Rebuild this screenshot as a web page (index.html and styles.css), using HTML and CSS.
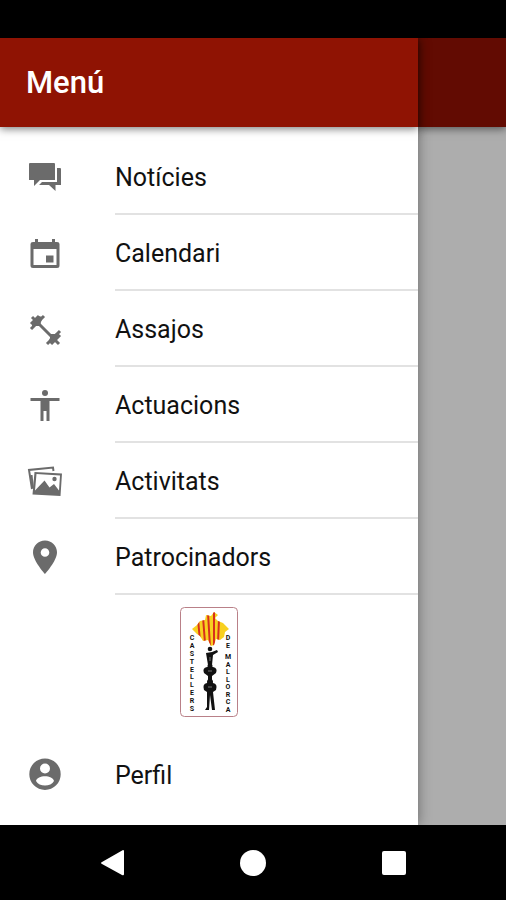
FILE: index.html
```html
<!DOCTYPE html>
<html lang="ca">
<head>
    <meta charset="UTF-8">
    <meta name="viewport" content="width=device-width, initial-scale=1.0">
    <title>Menú</title>
    <link rel="stylesheet" href="styles.css">
</head>
<body>
    <div class="status-bar"></div>

    <div class="screen">
        <aside class="drawer">
            <header class="toolbar">
                <h1>Menú</h1>
            </header>

            <nav class="menu">
                <a class="menu-item" href="#noticies">
                    <svg class="icon" viewBox="0 0 38 38">
                        <path d="M4 5H28Q29 5 29 6V22H14L8 28V22H3V6Q3 5 4 5Z"/>
                        <path d="M31 10H34Q35 10 35 11V27H29.500V33L23 27H13L16 24H31Z"/>
                    </svg>
                    <span class="label">Notícies</span>
                </a>
                <a class="menu-item" href="#calendari">
                    <svg class="icon" viewBox="0 0 38 38">
                        <path fill-rule="evenodd" d="M9 5H12V8H26V5H29V8H31Q33.500 8 33.500 10V31.500Q33.500 34 31 34H7Q4.500 34 4.500 31.500V10Q4.500 8 7 8H9ZM7.500 15V31H30.500V15Z"/>
                        <path d="M20 21.500H27.500V28.500H20Z"/>
                    </svg>
                    <span class="label">Calendari</span>
                </a>
                <a class="menu-item" href="#assajos">
                    <svg class="icon" viewBox="0 0 38 38">
                        <path class="stroke" d="M6 7L33 34"/>
                        <path class="stroke" d="M5 14L13 6M5 19L18 6M25 34L34 25M21 34L34 21"/>
                        <path d="M6 12L12 6L17 7L15 12L14 16L9 16L6 18ZM22 33L24 28L24 24L29 24L33 22L33 27L27 33Z"/>
                    </svg>
                    <span class="label">Assajos</span>
                </a>
                <a class="menu-item" href="#actuacions">
                    <svg class="icon" viewBox="0 0 38 38">
                        <circle cx="19" cy="7" r="3"/>
                        <path d="M4.500 12H33.500V15H23.500V35H20.500V25H17.500V35H14.500V15H4.500Z"/>
                    </svg>
                    <span class="label">Actuacions</span>
                </a>
                <a class="menu-item" href="#activitats">
                    <svg class="icon" viewBox="0 0 38 38">
                        <path class="stroke thin" d="M6 27L3 8L27 5.500L27.500 9"/>
                        <path class="stroke thin" d="M5.500 13L7 26"/>
                        <path fill-rule="evenodd" d="M8.500 10L36 11.500L34.500 34L6.500 32.500ZM10.500 12L9 28.500L18.500 18.500L23.500 25.500L28 22L33 28.500L34 13.500Z"/>
                        <circle cx="28.500" cy="17" r="2.200"/>
                    </svg>
                    <span class="label">Activitats</span>
                </a>
                <a class="menu-item" href="#patrocinadors">
                    <svg class="icon" viewBox="0 0 38 38">
                        <path fill-rule="evenodd" d="M19 2.500C12.300 2.500 7 7.800 7 14.300C7 23 19 36 19 36S31 23 31 14.300C31 7.800 25.700 2.500 19 2.500ZM19 10.200A4.300 4.300 0 1 1 19 18.800A4.300 4.300 0 1 1 19 10.200Z"/>
                    </svg>
                    <span class="label">Patrocinadors</span>
                </a>
            </nav>

            <svg class="logo" viewBox="0 0 58 110" role="img" aria-label="Castellers de Mallorca">
                <defs>
                    <clipPath id="island">
                        <path d="M12 22L17 18L20 14L25 13L26 8L31 9L34 5L38 8L35 11L38 14L43 16L49 22L45 25L44 30L40 33L36 32L34 38L31 39L28 33L23 34L20 29L17 27Z"/>
                    </clipPath>
                </defs>
                <rect class="logo-frame" x="0.500" y="0.500" width="57" height="109" rx="4"/>
                <g clip-path="url(#island)">
                    <path class="logo-yellow" d="M10 4H50V40H10Z"/>
                    <path class="logo-stripes" d="M18 12L20 34M23 10L25 36M28 6L30 40M34 4L34 40M39 12L38 36"/>
                </g>
                <!-- human tower -->
                <g class="logo-people">
                    <circle cx="30" cy="42" r="2.300"/>
                    <path d="M26 46L32 45L37 43L38 45L33 48L32 58H28Z"/>
                    <circle cx="30" cy="59" r="2.500"/>
                    <path d="M27 60Q22 61 24 66L28 69V75H32V69L36 66Q38 61 33 60Z"/>
                    <circle cx="30" cy="75" r="3"/>
                    <path d="M27 76Q22 77 24 83L27 85L27 100L25 103H29L30 88L32 103H35L33 85L36 83Q38 77 33 76Z"/>
                </g>
                <path class="logo-lines" d="M28 64H32M28 80H32M30 50V54"/>
                <g class="logo-text">
                    <text x="12 12 12 12 12 12 12 12 12 12" y="33 41 49 57 65 72 80 88 96 104">CASTELLERS</text>
                    <text x="48 48" y="33 41">DE</text>
                    <text x="48 48 48 48 48 48 48 48" y="52 60 67 75 82 90 97 105">MALLORCA</text>
                </g>
            </svg>

            <a class="menu-item profile" href="#perfil">
                <svg class="icon" viewBox="0 0 38 38">
                    <path fill-rule="evenodd" d="M19 3.500A15.700 15.700 0 1 1 19 34.900A15.700 15.700 0 1 1 19 3.500ZM19 8.500A5 5 0 1 0 19 18.500A5 5 0 1 0 19 8.500ZM10 26C13 32 25 32 28 26C27 19.500 11 19.500 10 26Z"/>
                </svg>
                <span class="label">Perfil</span>
            </a>
        </aside>

        <main class="page">
            <div class="toolbar page-toolbar"></div>
        </main>
    </div>

    <div class="system-nav">
        <button type="button" aria-label="Enrere">
            <svg viewBox="0 0 28 28"><path d="M4 13L25 1Q26 1 26 2V25Q26 27 24 26L4 15Q2 14 4 13Z"/></svg>
        </button>
        <button type="button" aria-label="Inici">
            <svg viewBox="0 0 28 28"><circle cx="14" cy="14" r="13"/></svg>
        </button>
        <button type="button" aria-label="Recents">
            <svg viewBox="0 0 28 28"><rect x="2" y="2" width="24" height="24" rx="2"/></svg>
        </button>
    </div>
</body>
</html>
```

FILE: styles.css
```css
* {
    margin: 0;
    padding: 0;
    box-sizing: border-box;
}

body {
    font-family: Roboto, sans-serif;
    background: #000;
    min-height: 100vh;
    display: flex;
    flex-direction: column;
}

.status-bar {
    height: 38px;
}

.screen {
    flex: 1;
    display: flex;
    overflow: hidden;
}

/* Side menu */
.drawer {
    flex: 1;
    display: flex;
    flex-direction: column;
    background: #fff;
    box-shadow: 0 0 12px rgba(0, 0, 0, 0.4);
    z-index: 1;
}

.toolbar {
    height: 89px;
    padding: 0 26px;
    display: flex;
    align-items: center;
    background: #8f1303;
    box-shadow: 0 2px 8px rgba(0, 0, 0, 0.5);
}

.toolbar h1 {
    color: #fff;
    font-size: 31px;
    font-weight: 500;
}

.menu {
    padding-top: 12px;
}

.menu-item {
    height: 76px;
    padding-left: 26px;
    display: flex;
    align-items: center;
    gap: 51px;
    color: #111;
    font-size: 25px;
    text-decoration: none;
}

.label {
    flex: 1;
    height: 100%;
    padding-top: 3px;
    display: flex;
    align-items: center;
    border-bottom: 2px solid #e2e2e2;
}

.profile .label {
    border-bottom: none;
}

.icon {
    width: 38px;
    height: 38px;
    fill: #6b6b6b;
}

.stroke {
    fill: none;
    stroke: #6b6b6b;
    stroke-width: 3;
}

.thin {
    stroke-width: 2;
}

/* Club logo */
.logo {
    width: 58px;
    height: 110px;
    margin: 12px auto 19px;
}

.logo-frame {
    fill: #fff;
    stroke: #b98088;
}

.logo-yellow {
    fill: #f8d020;
}

.logo-stripes {
    fill: none;
    stroke: #d8301c;
    stroke-width: 2;
}

.logo-people {
    fill: #111;
}

.logo-lines {
    stroke: #777;
}

.logo-text {
    font-size: 7px;
    font-weight: 700;
    text-anchor: middle;
    fill: #111;
}

/* Page behind the menu */
.page {
    width: 88px;
    background: #adadad;
}

.page-toolbar {
    background: #620b02;
}

/* Android buttons */
.system-nav {
    height: 75px;
    padding: 0 42px;
    display: flex;
    align-items: center;
    justify-content: space-around;
}

.system-nav button {
    background: none;
    border: none;
    cursor: pointer;
}

.system-nav svg {
    display: block;
    width: 28px;
    height: 28px;
    fill: #fff;
}
```
